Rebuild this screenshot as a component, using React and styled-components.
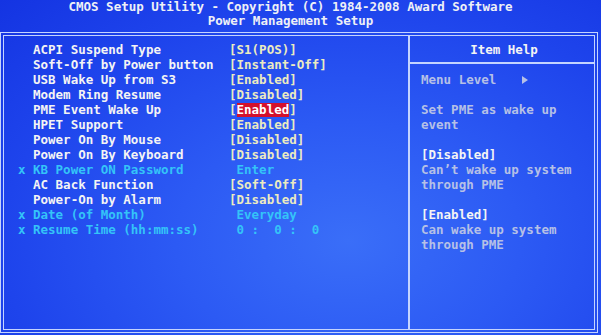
import React from "react";
import styled, { createGlobalStyle } from "styled-components";

const GlobalStyle = createGlobalStyle`
  html, body {
    margin: 0;
    padding: 0;
  }
  body {
    width: 601px;
    height: 335px;
    overflow: hidden;
    background: #1c44ec;
  }
`;

const items = [
  { label: "ACPI Suspend Type", value: "[S1(POS)]" },
  { label: "Soft-Off by Power button", value: "[Instant-Off]" },
  { label: "USB Wake Up from S3", value: "[Enabled]" },
  { label: "Modem Ring Resume", value: "[Disabled]" },
  { label: "PME Event Wake Up", value: "Enabled", selected: true },
  { label: "HPET Support", value: "[Enabled]" },
  { label: "Power On By Mouse", value: "[Disabled]" },
  { label: "Power On By Keyboard", value: "[Disabled]" },
  { label: "KB Power ON Password", value: " Enter", locked: true },
  { label: "AC Back Function", value: "[Soft-Off]" },
  { label: "Power-On by Alarm", value: "[Disabled]" },
  { label: "Date (of Month)", value: " Everyday", locked: true },
  { label: "Resume Time (hh:mm:ss)", value: " 0 :  0 :  0", locked: true },
];

const help = [
  { text: "" },
  { text: "Set PME as wake up" },
  { text: "event" },
  { text: "" },
  { text: "[Disabled]", strong: true },
  { text: "Can\u2019t wake up system" },
  { text: "through PME" },
  { text: "" },
  { text: "[Enabled]", strong: true },
  { text: "Can wake up system" },
  { text: "through PME" },
];

const Screen = styled.div`
  width: 601px;
  height: 335px;
  box-sizing: border-box;
  background: radial-gradient(
    ellipse at 58% 72%,
    #3a6ef8 0%,
    #2c5af4 35%,
    #1e44ec 70%,
    #1434e2 100%
  );
  font-family: "DejaVu Sans Mono", "Liberation Mono", monospace;
  font-weight: bold;
  font-size: 12.5px;
  color: #f2f2f2;
`;

const Header = styled.div`
  height: 32px;
  padding-right: 20px;
  text-align: center;
  line-height: 14px;
  white-space: pre;
  color: #eef0f6;
`;

const TitleLine = styled.div``;

const Frame = styled.div`
  width: 598px;
  height: 301px;
  box-sizing: border-box;
  border: 4px double #c4d4ff;
  display: flex;
`;

const MenuPane = styled.div`
  width: 404px;
  padding: 6px 0 0 14px;
  box-sizing: border-box;
`;

const Row = styled.div`
  display: grid;
  grid-template-columns: 15px 196px auto;
  height: 15px;
  line-height: 15px;
  white-space: pre;
`;

const Marker = styled.span`
  color: #34c4f8;
`;

const Label = styled.span`
  color: ${(p) => (p.$locked ? "#34c4f8" : "#f4f4f4")};
`;

const Value = styled.span`
  color: ${(p) => (p.$locked ? "#34c4f8" : "#ecebc0")};
`;

const Selected = styled.span`
  display: inline-block;
  line-height: 14px;
  background: #d4102c;
  color: #ffffff;
`;

const HelpPane = styled.div`
  flex: 1;
  border-left: 2px solid #c4d4ff;
  padding-top: 6px;
`;

const HelpTitle = styled.div`
  height: 15px;
  line-height: 15px;
  text-align: center;
  padding-left: 4px;
  color: #f4f4f4;
`;

const HelpRule = styled.div`
  height: 2px;
  margin: 5px 0 8px;
  background: #c4d4ff;
`;

const HelpBody = styled.div`
  padding-left: 11px;
`;

const HelpLine = styled.div`
  height: 15px;
  line-height: 15px;
  white-space: pre;
  color: ${(p) => (p.$strong ? "#f4f4f4" : "#b6c0e6")};
  display: flex;
  align-items: center;
`;

const Arrow = () => (
  <svg width="6" height="8" viewBox="0 0 6 8" style={{ marginLeft: 26 }}>
    <path d="M0 0 L6 4 L0 8 Z" fill="#b6c0e6" />
  </svg>
);

const MenuRow = ({ item }) => (
  <Row>
    <Marker>{item.locked ? "x" : ""}</Marker>
    <Label $locked={item.locked}>{item.label}</Label>
    <Value $locked={item.locked}>
      {item.selected ? (
        <>
          [<Selected>{item.value}</Selected>]
        </>
      ) : (
        item.value
      )}
    </Value>
  </Row>
);

export default function App() {
  return (
    <>
      <GlobalStyle />
      <Screen>
        <Header>
          <TitleLine>CMOS Setup Utility - Copyright (C) 1984-2008 Award Software</TitleLine>
          <TitleLine>Power Management Setup</TitleLine>
        </Header>
        <Frame>
          <MenuPane>
            {items.map((item) => (
              <MenuRow key={item.label} item={item} />
            ))}
          </MenuPane>
          <HelpPane>
            <HelpTitle>Item Help</HelpTitle>
            <HelpRule />
            <HelpBody>
              <HelpLine>
                Menu Level
                <Arrow />
              </HelpLine>
              {help.map((line, i) => (
                <HelpLine key={i} $strong={line.strong}>
                  {line.text}
                </HelpLine>
              ))}
            </HelpBody>
          </HelpPane>
        </Frame>
      </Screen>
    </>
  );
}
